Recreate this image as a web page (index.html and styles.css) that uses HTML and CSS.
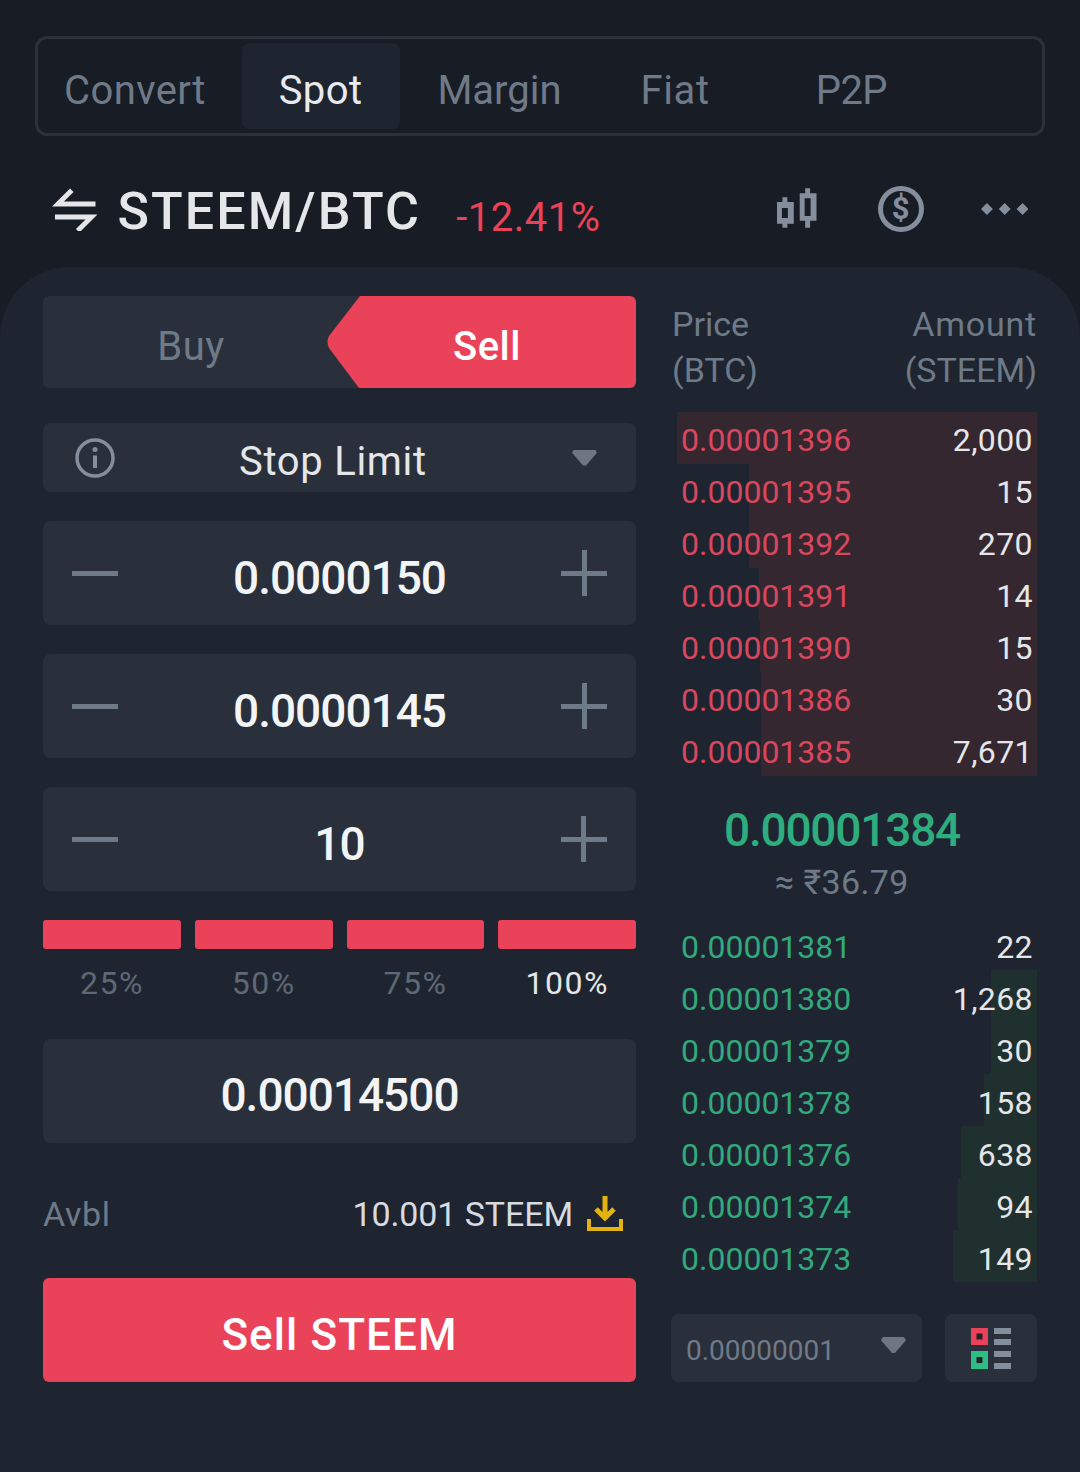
FILE: index.html
```html
<!DOCTYPE html>
<html lang="en">
<head>
    <meta charset="UTF-8">
    <meta name="viewport" content="width=device-width, initial-scale=1.0">
    <title>STEEM/BTC</title>
    <link rel="stylesheet" href="styles.css">
</head>
<body>
    <nav class="tabs">
        <div class="tab tab-first">Convert</div>
        <div class="tab tab-active">Spot</div>
        <div class="tab tab-margin">Margin</div>
        <div class="tab tab-fiat">Fiat</div>
        <div class="tab tab-p2p">P2P</div>
    </nav>

    <header class="pair">
        <svg class="swap" width="46" height="44" viewBox="0 0 46 44">
            <path d="M20 3 L6 17 H44 M3 30 H40 L26 44" fill="none" stroke="#e4e6ea" stroke-width="5"/>
        </svg>
        <div class="pair-name">STEEM/BTC</div>
        <div class="pair-change">-12.41%</div>
        <svg class="candles" width="42" height="42" viewBox="0 0 42 42">
            <path d="M9 9V40M32 0V40" stroke="#848e9c" stroke-width="5"/>
            <path d="M1 14H18V36H1ZM24 5H41V33H24Z" fill="#848e9c"/>
            <path d="M6 20H12V30H6ZM29 10H35V28H29Z" fill="#181c24"/>
        </svg>
        <div class="coin">$</div>
        <svg class="dots" width="48" height="12" viewBox="0 0 48 12">
            <path d="M6 0L12 6L6 12L0 6ZM24 0L30 6L24 12L18 6ZM42 0L48 6L42 12L36 6Z" fill="#848e9c"/>
        </svg>
    </header>

    <main class="panel">
        <section class="order">
            <div class="side">
                <div class="side-buy">Buy</div>
                <div class="side-sell">Sell</div>
            </div>

            <div class="type">
                <svg width="40" height="40" viewBox="0 0 40 40">
                    <circle cx="20" cy="20" r="18" fill="none" stroke="#848e9c" stroke-width="3.5"/>
                    <path d="M20 17.5V30" stroke="#848e9c" stroke-width="4"/>
                    <circle cx="20" cy="11.5" r="2.5" fill="#848e9c"/>
                </svg>
                <div class="type-name">Stop Limit</div>
                <div class="caret"></div>
            </div>

            <div class="stepper">
                <span class="minus"></span>
                <div class="value">0.0000150</div>
                <span class="plus"></span>
            </div>
            <div class="stepper">
                <span class="minus"></span>
                <div class="value">0.0000145</div>
                <span class="plus"></span>
            </div>
            <div class="stepper">
                <span class="minus"></span>
                <div class="value">10</div>
                <span class="plus"></span>
            </div>

            <div class="percents">
                <div class="percent"><span class="percent-bar"></span>25%</div>
                <div class="percent"><span class="percent-bar"></span>50%</div>
                <div class="percent"><span class="percent-bar"></span>75%</div>
                <div class="percent percent-on"><span class="percent-bar"></span>100%</div>
            </div>

            <div class="total">0.00014500</div>

            <div class="avbl">
                <div class="avbl-label">Avbl</div>
                <div class="avbl-value">10.001 STEEM</div>
                <svg width="36" height="36" viewBox="0 0 36 36">
                    <path d="M18 0V20M9 13L18 22L27 13" fill="none" stroke="#e5b30f" stroke-width="5"/>
                    <path d="M2 23V33H34V23" fill="none" stroke="#e5b30f" stroke-width="4"/>
                </svg>
            </div>

            <div class="submit">Sell STEEM</div>
        </section>

        <section class="book">
            <div class="book-head">
                <div>Price<br>(BTC)</div>
                <div class="book-head-right">Amount<br>(STEEM)</div>
            </div>

            <div class="rows asks">
                <div class="row"><i class="depth" style="width: 360px"></i><span>0.00001396</span><b>2,000</b></div>
                <div class="row"><i class="depth" style="width: 288px"></i><span>0.00001395</span><b>15</b></div>
                <div class="row"><i class="depth" style="width: 288px"></i><span>0.00001392</span><b>270</b></div>
                <div class="row"><i class="depth" style="width: 278px"></i><span>0.00001391</span><b>14</b></div>
                <div class="row"><i class="depth" style="width: 277px"></i><span>0.00001390</span><b>15</b></div>
                <div class="row"><i class="depth" style="width: 276px"></i><span>0.00001386</span><b>30</b></div>
                <div class="row"><i class="depth" style="width: 276px"></i><span>0.00001385</span><b>7,671</b></div>
            </div>

            <div class="mid">
                <div class="mid-price">0.00001384</div>
                <div class="mid-fiat">≈ ₹36.79</div>
            </div>

            <div class="rows bids">
                <div class="row"><span>0.00001381</span><b>22</b></div>
                <div class="row"><i class="depth" style="width: 46px"></i><span>0.00001380</span><b>1,268</b></div>
                <div class="row"><i class="depth" style="width: 46px"></i><span>0.00001379</span><b>30</b></div>
                <div class="row"><i class="depth" style="width: 53px"></i><span>0.00001378</span><b>158</b></div>
                <div class="row"><i class="depth" style="width: 76px"></i><span>0.00001376</span><b>638</b></div>
                <div class="row"><i class="depth" style="width: 79px"></i><span>0.00001374</span><b>94</b></div>
                <div class="row"><i class="depth" style="width: 84px"></i><span>0.00001373</span><b>149</b></div>
            </div>

            <div class="book-foot">
                <div class="decimals">
                    <div>0.00000001</div>
                    <div class="caret"></div>
                </div>
                <div class="layout">
                    <svg width="40" height="41" viewBox="0 0 40 41">
                        <path d="M0 0H17V17H0Z" fill="#ea4359"/>
                        <path d="M0 23H17V41H0Z" fill="#2ebd85"/>
                        <path d="M5.500 5.500H11.500V11.500H5.500ZM5.500 29H11.500V35H5.500Z" fill="#23222b"/>
                        <path d="M23 0H40V6H23ZM23 11H40V17H23ZM23 23H40V29H23ZM23 35H40V41H23Z" fill="#848e9c"/>
                    </svg>
                </div>
            </div>
        </section>
    </main>
</body>
</html>
```

FILE: styles.css
```css
* {
    box-sizing: border-box;
}
body {
    margin: 0;
    height: 1472px;
    overflow: hidden;
    display: flex;
    flex-direction: column;
    background-color: #181c24;
    font-family: Roboto, 'Noto Sans', sans-serif;
    color: #e8eaed;
}

/* top tabs */
.tabs {
    display: flex;
    height: 100px;
    margin: 36px 35px 0;
    padding: 4px;
    border: 3px solid #2b303a;
    border-radius: 12px;
    font-size: 40px;
    letter-spacing: 0.4px;
    color: #6f7a89;
}
.tab {
    display: flex;
    align-items: center;
    padding: 8px 37px 0;
    border-radius: 8px;
}
.tab-first {
    padding-left: 22px;
    padding-right: 36px;
}
.tab-active {
    padding-right: 38px;
    background-color: #1e2530;
    color: #e8eaed;
}
.tab-margin {
    letter-spacing: 0;
}
.tab-fiat {
    margin-left: 5px;
    letter-spacing: 0.6px;
}
.tab-p2p {
    margin-left: 32px;
    letter-spacing: -0.5px;
}

/* pair header */
.pair {
    display: flex;
    align-items: center;
    height: 131px;
    padding: 14px 52px 0;
}
.pair-name {
    margin: 6px 0 0 20px;
    font-size: 52px;
    font-weight: 500;
    letter-spacing: 2.1px;
    color: #e4e6ea;
}
.pair-change {
    margin: 18px 0 0 35px;
    font-size: 40px;
    letter-spacing: 0.5px;
    color: #ea4359;
}
.candles {
    margin-left: 176px;
}
.coin {
    width: 46px;
    height: 46px;
    margin-left: 60px;
    border: 5px solid #848e9c;
    border-radius: 50%;
    font-size: 31px;
    font-weight: 700;
    line-height: 36px;
    text-align: center;
    color: #848e9c;
}
.dots {
    margin-left: 57px;
}

/* panel */
.panel {
    flex: 1;
    display: flex;
    gap: 36px;
    padding: 29px 43px 0;
    border-radius: 70px 70px 0 0;
    background-color: #1e2530;
}
.order {
    width: 593px;
}
.book {
    width: 365px;
}

/* order form */
.side {
    display: flex;
    height: 92px;
    border-radius: 6px;
    background-color: #2a303b;
    font-size: 40px;
    line-height: 102px;
    text-align: center;
}
.side-buy {
    width: 284px;
    padding-left: 12px;
    letter-spacing: 0.5px;
    color: #6f7a89;
}
.side-sell {
    width: 309px;
    padding-left: 11px;
    background-color: #ea4359;
    color: #fff;
    font-weight: 500;
    letter-spacing: 0.5px;
    clip-path: path("M33 0H303a6 6 0 0 1 6 6V86a6 6 0 0 1-6 6H32L2 52q-3-6 0-12Z");
}
.type {
    display: flex;
    align-items: center;
    height: 69px;
    margin-top: 35px;
    padding: 0 39px 0 32px;
    border-radius: 8px;
    background-color: #2a303b;
}
.type-name {
    margin: 8px auto 0 124px;
    font-size: 40px;
    letter-spacing: 0.7px;
    color: #e4e6ea;
}
.caret {
    width: 25px;
    height: 16px;
    background-color: #6f7583;
    clip-path: polygon(8% 0, 92% 0, 100% 20%, 56% 100%, 44% 100%, 0 20%);
}
.stepper {
    display: flex;
    align-items: center;
    justify-content: space-between;
    height: 104px;
    margin-top: 29px;
    padding: 0 29px;
    border-radius: 8px;
    background-color: #2a303b;
}
.value {
    padding-top: 10px;
    font-size: 46px;
    font-weight: 500;
    letter-spacing: -1px;
    color: #f3f4f6;
}
.minus, .plus {
    width: 46px;
    height: 46px;
    background: linear-gradient(#6f7a89, #6f7a89) center / 46px 5px no-repeat;
}
.plus {
    background: linear-gradient(#6f7a89, #6f7a89) center / 46px 5px no-repeat,
                linear-gradient(#6f7a89, #6f7a89) center / 5px 46px no-repeat;
}
.percents {
    display: flex;
    gap: 14px;
    margin-top: 29px;
}
.percent {
    flex: 1;
    font-size: 32px;
    letter-spacing: 1.5px;
    text-align: center;
    color: #5f6875;
}
.percent-on {
    color: #e4e6ea;
}
.percent-bar {
    display: block;
    height: 29px;
    margin-bottom: 15px;
    border-radius: 3px;
    background-color: #ea4359;
}
.total {
    height: 104px;
    margin-top: 37px;
    padding-top: 4px;
    border-radius: 8px;
    background-color: #2a303b;
    font-size: 46px;
    font-weight: 500;
    letter-spacing: -1px;
    line-height: 104px;
    text-align: center;
    color: #f3f4f6;
}
.avbl {
    display: flex;
    align-items: center;
    height: 135px;
    padding: 6px 13px 0 0;
    font-size: 34px;
}
.avbl-label {
    margin-right: auto;
    letter-spacing: 0.6px;
    color: #6f7a89;
}
.avbl-value {
    margin-right: 14px;
    letter-spacing: -0.1px;
    color: #d8dbe0;
}
.submit {
    height: 104px;
    border-radius: 6px;
    background-color: #ea4359;
    font-size: 44px;
    font-weight: 500;
    letter-spacing: 1.1px;
    line-height: 114px;
    text-align: center;
    color: #fff;
}

/* order book */
.book-head {
    display: flex;
    justify-content: space-between;
    height: 92px;
    margin-top: 5px;
    font-size: 34px;
    line-height: 46px;
    color: #6f7a89;
}
.book-head-right {
    text-align: right;
}
.book-head-right::first-line {
    letter-spacing: 0.8px;
}
.rows {
    margin-left: 5px;
}
.asks {
    margin-top: 19px;
}
.row {
    position: relative;
    display: flex;
    justify-content: space-between;
    height: 52px;
    padding: 0 4px;
    font-size: 32px;
    line-height: 57px;
}
.bids .row {
    line-height: 58px;
}
.row span, .row b {
    position: relative;
    font-weight: 400;
}
.row b {
    letter-spacing: 0.4px;
    color: #e4e6ea;
}
.depth {
    position: absolute;
    top: 0;
    right: 0;
    bottom: 0;
}
.asks span {
    color: #d9475f;
}
.asks .depth {
    background-color: #35272f;
}
.bids span {
    color: #32a97c;
}
.bids .depth {
    background-color: #20302f;
}
.mid {
    height: 142px;
    padding-right: 25px;
    text-align: center;
}
.mid-price {
    padding-top: 26px;
    font-size: 46px;
    font-weight: 500;
    letter-spacing: -1.2px;
    line-height: 56px;
    color: #2ead7f;
}
.mid-fiat {
    padding-top: 1px;
    font-size: 34px;
    letter-spacing: 0.4px;
    line-height: 46px;
    color: #6f7a89;
}
.book-foot {
    display: flex;
    justify-content: space-between;
    margin-top: 32px;
}
.decimals, .layout {
    display: flex;
    align-items: center;
    height: 68px;
    border-radius: 8px;
    background-color: #2a303b;
}
.decimals {
    justify-content: space-between;
    width: 251px;
    margin-left: -1px;
    padding: 4px 16px 0 15px;
    font-size: 28px;
    color: #6f7a89;
}
.decimals .caret {
    margin-top: -10px;
}
.layout {
    justify-content: center;
    width: 92px;
}
```
